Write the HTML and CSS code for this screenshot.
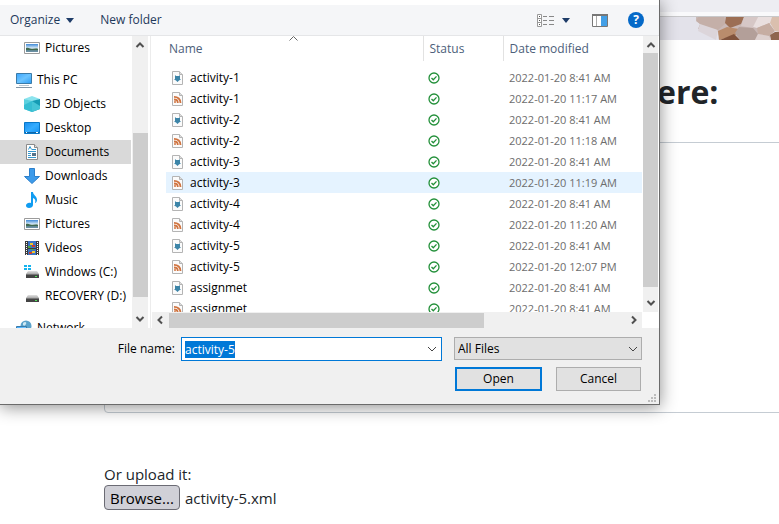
FILE: index.html
```html
<!DOCTYPE html>
<html lang="en">
<head>
<meta charset="utf-8">
<title>Upload activity</title>
<link rel="stylesheet" href="styles.css">
</head>
<body>
<svg class="defs" aria-hidden="true">
  <defs>
    <linearGradient id="sky" x1="0" y1="0" x2="0" y2="1"><stop offset="0" stop-color="#3f8ad8"/><stop offset=".55" stop-color="#e4f1f8"/><stop offset=".6" stop-color="#527b78"/><stop offset="1" stop-color="#6f94ac"/></linearGradient>
    <linearGradient id="screen" x1="0" y1="0" x2="1" y2="1"><stop offset="0" stop-color="#3aa5ff"/><stop offset=".5" stop-color="#6cc4ff"/><stop offset="1" stop-color="#2d9cf4"/></linearGradient>
    <linearGradient id="deep" x1="0" y1="0" x2="1" y2="1"><stop offset="0" stop-color="#1a8dee"/><stop offset=".5" stop-color="#35adff"/><stop offset="1" stop-color="#1590f0"/></linearGradient>
    <linearGradient id="metal" x1="0" y1="0" x2="0" y2="1"><stop offset="0" stop-color="#e2e2e2"/><stop offset="1" stop-color="#a9a9a9"/></linearGradient>
  </defs>
  <symbol id="i-pictures" viewBox="0 0 16 16"><path d="M.5 2.500h15v11H.5z" fill="#fff" stroke="#9b9b9b"/><path d="M2 4h12v8H2z" fill="url(#sky)"/><path d="M2 8c3-1 4 1 6 1s4-1 6 0v1H2z" fill="#416a50"/></symbol>
  <symbol id="i-pc" viewBox="0 0 16 16"><path d="M.5 1.500h15v10H.5z" fill="url(#screen)" stroke="#3b7ba8"/><path d="M3 13h10v1H3z" fill="#b9c6d0"/><path d="M0 15h16v1H0z" fill="#8496a5"/></symbol>
  <symbol id="i-cube" viewBox="0 0 16 16"><path d="M0 3l8-3 8 3-8 3z" fill="#8ce4ee"/><path d="M0 3l8 2v11l-8-3z" fill="#5bd0de"/><path d="M16 3L8 5v11l8-3z" fill="#159bb4"/><path d="M0 9l8-4v11l-8-3z" fill="#35bdd2"/><path d="M8 5l8 5v3l-8 3z" fill="#44c4d6"/></symbol>
  <symbol id="i-desktop" viewBox="0 0 16 16"><path d="M.5 2.500h15v11H.5z" fill="url(#deep)" stroke="#0878c8"/><path d="M1 12h14v1H1z" fill="#1167a8"/><path d="M2 12h1v1H2zM12 12h2v1h-2z" fill="#fff"/></symbol>
  <symbol id="i-doc" viewBox="0 0 16 16"><path d="M2.500.5h8l3 3v12h-11z" fill="#fff" stroke="#8b8b8b"/><path d="M10.500.5v3h3" fill="#ddd" stroke="#8b8b8b"/><path d="M4.500 5.500l1.500-3 1.500 3M8 5.500h4M4 7.500h8M4 9.500h3M4 11.500h3M4 13.500h8" fill="none" stroke="#3497cf"/><path d="M8 9h4v3H8z" fill="#55738a"/></symbol>
  <symbol id="i-down" viewBox="0 0 16 16"><path d="M5.500.5h5v8h5L8 15.500.5 8.500h5z" fill="#3d9bea" stroke="#2c7fcb"/></symbol>
  <symbol id="i-music" viewBox="0 0 16 16"><path d="M7 0h2c0 3 4 4 4 8 0 1-1 3-2 3 1-3 0-4-2-5v7c0 2-2 3-4 3s-3-1-3-2.500S4 10 7 11z" fill="#109cf1"/></symbol>
  <symbol id="i-video" viewBox="0 0 16 16"><path d="M1 1h14v14H1z" fill="#3c3c3c"/><path d="M4 1h8v7H4zM4 9h8v6H4z" fill="#3a72c4"/><path d="M2.500 2v13M13.500 2v13" stroke="#fff" stroke-dasharray="1 1"/><path d="M6 3h3v2H6zM8 11h3v2H8z" fill="#f0c52c"/><path d="M8 5h3v2H8zM5 12h3v2H5z" fill="#c83c2e"/><path d="M4 6h3v2H4zM7 9h3v1H7z" fill="#4ba846"/></symbol>
  <symbol id="i-drive" viewBox="0 0 16 16"><path d="M4 7h9l2 3H2z" fill="url(#metal)"/><path d="M2 10h13v4H2z" fill="#444"/><path d="M2 10h13v1H2z" fill="#777"/><path d="M11 12h2v1h-2z" fill="#51e35a"/></symbol>
  <symbol id="i-windrive" viewBox="0 0 16 16"><use href="#i-drive"/><path d="M0 1h3v2H0zM4 1h3v2H4zM0 4h3v2H0zM4 4h3v2H4z" fill="#15b3ee"/></symbol>
  <symbol id="i-network" viewBox="0 0 16 16"><circle cx="10" cy="6" r="5.500" fill="#5ba3cb"/><path d="M7 3c2-2 4-1 3 1s-2 2-3 1z" fill="#cfe9f4"/><path d="M.5 6.500h10v7H.5z" fill="url(#screen)" stroke="#3b7ba8"/></symbol>
  <symbol id="i-page" viewBox="0 0 11 14"><path d="M.5.5h7l3 3v10H.5z" fill="#fbfbfb" stroke="#b4b4b4"/><path d="M7.500.5v3h3" fill="#ddd" stroke="#b4b4b4"/></symbol>
  <symbol id="i-code" viewBox="0 0 11 14"><use href="#i-page"/><path d="M3 4l1 1h3l1-1v4l1 .500-2 1L5.500 11 4 9.500l-2-1L3 8z" fill="#3d85a8"/></symbol>
  <symbol id="i-feed" viewBox="0 0 11 14"><use href="#i-page"/><path d="M2 4.800c4 0 6.500 2.500 6.500 6.200M2 7.500c2.500 0 3.800 1.400 3.800 3.500" fill="none" stroke="#d07440" stroke-width="1.800"/><circle cx="3" cy="10" r="1" fill="#d07440"/></symbol>
  <symbol id="i-ok" viewBox="0 0 12 12"><circle cx="6" cy="6" r="5" fill="#fff" stroke="#23903a" stroke-width="1.300"/><path d="M3.500 6l1.800 1.800 3.200-3.400" fill="none" stroke="#23903a" stroke-width="1.300"/></symbol>
  <symbol id="i-chev" viewBox="0 0 10 10"><path d="M1.500 7L5 3.500 8.500 7" fill="none" stroke="#505050" stroke-width="2"/></symbol>
</svg>

<main class="page">
  <div class="browser-bar"></div>
  <div class="banner">
    <svg class="mosaic" viewBox="0 0 89 23" aria-hidden="true">
      <path d="M6 0h74v23H30L28 15 8 12 10 7 6 3z" fill="#c9b8b6"/>
      <path d="M10 7l12-1 6 8-2 9-18-9z" fill="#dcd5da"/>
      <path d="M8 0h26l2 6-8 7-18-6-4-3z" fill="#c4afa8"/>
      <path d="M36 0h18l-3 7-11 4-5-5z" fill="#9c6e54"/>
      <path d="M28 14l9-4 12 2-3 6-17 5z" fill="#b98c6c"/>
      <path d="M30 23l14-6 6 6z" fill="#80533c"/>
      <path d="M54 0h14l-5 11-12-2z" fill="#d6c7c6"/>
      <path d="M68 0h14l-2 6-13 5-4-1z" fill="#e9dfdf"/>
      <path d="M49 10l14 1 5 6-3 6H50l-5-7z" fill="#b39f99"/>
      <path d="M67 11l12-5 6 8-6 5-11-2z" fill="#c6ada2"/>
      <path d="M82 0h7v15l-4-1-5-8z" fill="#dabfae"/>
      <path d="M68 17l11 2 2 4H65z" fill="#ddd0ce"/>
      <path d="M80 18l5-3h4v8h-8z" fill="#8e664f"/>
    </svg>
  </div>
  <h1 class="title">ere:</h1>
  <textarea class="source" aria-label="Activity source"></textarea>
  <div class="upload">
    <div>Or upload it:</div>
    <div class="picker"><button class="browse" type="button">Browse...</button><span>activity-5.xml</span></div>
  </div>
</main>

<section class="dialog" role="dialog" aria-label="File upload">
  <div class="toolbar">
    <button class="tool organize" type="button">Organize <svg width="8" height="5" viewBox="0 0 8 5"><path d="M0 0h8L4 5z" fill="#1e3c68"/></svg></button>
    <button class="tool" type="button">New folder</button>
    <span class="spacer"></span>
    <button class="tool views" type="button" aria-label="View">
      <svg width="17" height="13" viewBox="0 0 17 13"><path d="M.5.5h4v12h-4zM.5 4.500h4M.5 8.500h4" fill="#fff" stroke="#999"/><path d="M2 2h1v1H2zM2 6h1v1H2zM2 10h1v1H2z" fill="#555"/><path d="M6 2.500h4M12 2.500h5M6 6.500h4M12 6.500h5M6 10.500h4M12 10.500h5" stroke="#888"/></svg>
      <svg width="8" height="5" viewBox="0 0 8 5"><path d="M0 0h8L4 5z" fill="#1e3c68"/></svg>
    </button>
    <button class="tool" type="button" aria-label="Preview pane"><svg width="16" height="13" viewBox="0 0 16 13"><path d="M.5 1h15v11.500H.5z" fill="#fff" stroke="#777"/><path d="M0 0h16v2H0z" fill="#777"/><path d="M4.500 2v10" stroke="#aaa"/><path d="M9 2h6v10H9z" fill="#439fe6"/></svg></button>
    <button class="tool help" type="button" aria-label="Help">?</button>
  </div>

  <div class="body">
    <nav class="nav">
      <ul class="tree">
        <li class="sub"><svg><use href="#i-pictures"/></svg>Pictures</li>
        <li class="root"><svg><use href="#i-pc"/></svg>This PC</li>
        <li class="sub"><svg><use href="#i-cube"/></svg>3D Objects</li>
        <li class="sub"><svg><use href="#i-desktop"/></svg>Desktop</li>
        <li class="sub current"><svg><use href="#i-doc"/></svg>Documents</li>
        <li class="sub"><svg><use href="#i-down"/></svg>Downloads</li>
        <li class="sub"><svg><use href="#i-music"/></svg>Music</li>
        <li class="sub"><svg><use href="#i-pictures"/></svg>Pictures</li>
        <li class="sub"><svg><use href="#i-video"/></svg>Videos</li>
        <li class="sub"><svg><use href="#i-windrive"/></svg>Windows (C:)</li>
        <li class="sub"><svg><use href="#i-drive"/></svg>RECOVERY (D:)</li>
        <li class="root"><svg><use href="#i-network"/></svg>Network</li>
      </ul>
      <div class="vbar"><svg class="up"><use href="#i-chev"/></svg><i class="thumb nav-thumb"></i><svg class="dn"><use href="#i-chev"/></svg></div>
    </nav>
    <div class="files">
      <div class="list">
        <table class="grid">
          <colgroup><col><col class="c-status"><col class="c-date"></colgroup>
          <thead><tr><th><svg class="sort" viewBox="0 0 9 5"><path d="M.5 4.500l4-4 4 4" fill="none" stroke="#666"/></svg>Name</th><th>Status</th><th>Date modified</th></tr></thead>
          <tbody>
            <tr><td><svg><use href="#i-code"/></svg>activity-1</td><td><svg><use href="#i-ok"/></svg></td><td>2022-01-20 8:41 AM</td></tr>
            <tr><td><svg><use href="#i-feed"/></svg>activity-1</td><td><svg><use href="#i-ok"/></svg></td><td>2022-01-20 11:17 AM</td></tr>
            <tr><td><svg><use href="#i-code"/></svg>activity-2</td><td><svg><use href="#i-ok"/></svg></td><td>2022-01-20 8:41 AM</td></tr>
            <tr><td><svg><use href="#i-feed"/></svg>activity-2</td><td><svg><use href="#i-ok"/></svg></td><td>2022-01-20 11:18 AM</td></tr>
            <tr><td><svg><use href="#i-code"/></svg>activity-3</td><td><svg><use href="#i-ok"/></svg></td><td>2022-01-20 8:41 AM</td></tr>
            <tr class="hover"><td><svg><use href="#i-feed"/></svg>activity-3</td><td><svg><use href="#i-ok"/></svg></td><td>2022-01-20 11:19 AM</td></tr>
            <tr><td><svg><use href="#i-code"/></svg>activity-4</td><td><svg><use href="#i-ok"/></svg></td><td>2022-01-20 8:41 AM</td></tr>
            <tr><td><svg><use href="#i-feed"/></svg>activity-4</td><td><svg><use href="#i-ok"/></svg></td><td>2022-01-20 11:20 AM</td></tr>
            <tr><td><svg><use href="#i-code"/></svg>activity-5</td><td><svg><use href="#i-ok"/></svg></td><td>2022-01-20 8:41 AM</td></tr>
            <tr><td><svg><use href="#i-feed"/></svg>activity-5</td><td><svg><use href="#i-ok"/></svg></td><td>2022-01-20 12:07 PM</td></tr>
            <tr><td><svg><use href="#i-code"/></svg>assignmet</td><td><svg><use href="#i-ok"/></svg></td><td>2022-01-20 8:41 AM</td></tr>
            <tr><td><svg><use href="#i-feed"/></svg>assignmet</td><td><svg><use href="#i-ok"/></svg></td><td>2022-01-20 8:41 AM</td></tr>
          </tbody>
        </table>
      </div>
      <div class="vbar"><svg class="up"><use href="#i-chev"/></svg><i class="thumb list-thumb"></i><svg class="dn"><use href="#i-chev"/></svg></div>
      <div class="hbar"><svg class="lt"><use href="#i-chev"/></svg><i class="thumb wide-thumb"></i><svg class="rt"><use href="#i-chev"/></svg></div>
    </div>
  </div>

  <form class="footer">
    <label class="name-label" for="fname">File name:</label>
    <div class="combo"><input id="fname" type="text" value="activity-5" autocomplete="off" spellcheck="false"><svg viewBox="0 0 10 6"><path d="M1 1l4 4 4-4" fill="none" stroke="#444"/></svg></div>
    <div class="type"><select aria-label="File type"><option>All Files</option></select><svg viewBox="0 0 10 6"><path d="M1 1l4 4 4-4" fill="none" stroke="#444"/></svg></div>
    <div class="actions"><button class="primary" type="button">Open</button><button type="button">Cancel</button></div>
    <svg class="grip" viewBox="0 0 8 8" aria-hidden="true"><path d="M6 0h2v2H6zM3 3h2v2H3zM6 3h2v2H6zM0 6h2v2H0zM3 6h2v2H3zM6 6h2v2H6z" fill="#bcbcbc"/></svg>
  </form>
</section>
<script src="main.js"></script>
</body>
</html>
```
FILE: styles.css
```css
* { box-sizing: border-box; }
body {
  margin: 0;
  background: #fff;
  color: #212529;
  font: 15px/24px "Open Sans", "Noto Sans", sans-serif;
  overflow: hidden;
}
button, input, select { font: inherit; color: inherit; margin: 0; }
.defs { position: absolute; width: 0; height: 0; }

/* page behind the dialog */
.page { display: flex; flex-direction: column; }
.browser-bar { height: 17px; background: linear-gradient(#ededf2 12px, #f9f9fb 12px 16px, #c8c8ca 16px); }
.banner { display: flex; justify-content: flex-end; height: 23px; background: #e3e2ea; }
.mosaic { width: 89px; height: 23px; }
.title { margin: 32px 0 0; padding-left: 657px; font: 700 32px/40px "Open Sans", sans-serif; }
.source {
  height: 271px;
  margin: 30px -8px 0 104px;
  border: 1px solid #c5ccd3;
  border-radius: 4px;
  background: #fff;
  resize: none;
}
.upload { margin: 50px 0 0 104px; line-height: 22px; }
.picker { display: flex; align-items: center; gap: 5px; }
.browse {
  height: 25px;
  padding: 0 5px;
  border: 1px solid #6b6b74;
  border-radius: 4px;
  background: #d0d0d7;
  color: #000;
  line-height: 22px;
}

/* file dialog */
.dialog {
  position: absolute;
  top: 0;
  left: 0;
  right: 119px;
  padding-top: 5px;
  border: solid #6b6b6b;
  border-width: 0 1px 1px 0;
  background: #fff;
  color: #000;
  font-size: 12px;
  line-height: 16px;
  box-shadow: 0 2px 16px rgba(0, 0, 0, .45);
}
.toolbar {
  display: flex;
  align-items: center;
  gap: 22px;
  height: 31px;
  padding: 0 15px 0 10px;
  border-bottom: 1px solid #e5e6e8;
  background: #f5f6f8;
}
.tool { display: flex; align-items: center; gap: 6px; padding: 0; border: 0; background: none; color: #1e395b; }
.organize { margin-right: 4px; }
.spacer { flex: 1; }
.views { gap: 8px; }
.help {
  justify-content: center;
  width: 16px;
  height: 16px;
  border-radius: 50%;
  background: #0569c8;
  color: #fff;
  font-weight: 700;
  margin-left: -2px;
}
.body { display: flex; height: 292px; }
.nav { display: flex; width: 151px; border-right: 1px solid #ececec; overflow: hidden; }
.tree { flex: 1; margin: 0; padding: 0; list-style: none; }
.tree li { display: flex; align-items: center; height: 24px; margin-right: 1px; white-space: nowrap; }
.tree svg { width: 16px; height: 16px; flex: none; }
.root { margin-top: 8px; padding-left: 16px; gap: 5px; }
.sub { padding-left: 24px; gap: 5px; }
.current { background: #d9d9d9; }
.vbar {
  display: flex;
  flex-direction: column;
  align-items: center;
  width: 16px;
  padding: 4px 0;
  background: #f0f0f0;
}
.nav .vbar { margin-right: 2px; }
.vbar svg, .hbar svg { width: 10px; height: 10px; flex: none; }
.thumb { background: #cdcdcd; }
.nav-thumb { width: 15px; height: 164px; margin-top: 83px; }
.dn { margin-top: auto; transform: rotate(180deg); }
.lt { transform: rotate(-90deg); }
.rt { transform: rotate(90deg); margin-left: auto; }
.files {
  flex: 1;
  display: grid;
  grid-template: 276px 16px / 1fr 17px;
  padding-left: 1px;
}
.files .vbar { width: 15px; margin-left: 1px; }
.list-thumb { width: 15px; height: 234px; margin-top: 3px; }
.hbar { display: flex; align-items: center; padding: 0 3px; background: #f0f0f0; }
.wide-thumb { width: 65%; height: 15px; margin-left: 4px; }
.list { overflow: hidden; padding-left: 14px; }
.grid { width: 100%; border-collapse: collapse; table-layout: fixed; }
.c-status { width: 80px; }
.c-date { width: 139px; }
.grid th {
  position: relative;
  height: 25px;
  padding: 0 6px;
  border-right: 1px solid #e2e2e2;
  color: #4c607a;
  font-weight: 400;
  text-align: left;
}
.grid th:first-child { padding-left: 3px; }
.grid th:last-child { border-right: 0; }
.sort { position: absolute; top: 0; left: 50%; width: 9px; height: 5px; margin-left: -5px; }
.grid tbody::before { content: ""; display: block; height: 6px; }
.grid td { height: 21px; padding: 0 6px; color: #6d6d6d; white-space: nowrap; }
.grid td:first-child { color: #000; }
.grid td:last-child { font-size: 11px; }
.grid td svg { width: 12px; height: 12px; vertical-align: middle; margin-left: -1px; }
.grid td:first-child svg { width: 11px; height: 14px; margin: 0 7px 0 0; }
.hover { background: #e5f3ff; }

.footer {
  position: relative;
  display: grid;
  grid-template: 24px 24px / 175px 1fr 188px;
  column-gap: 6px;
  row-gap: 6px;
  padding: 9px 17px 13px 0;
  background: #f0f0f0;
}
.name-label { text-align: right; align-self: center; }
.combo, .type { display: flex; align-items: center; }
.combo { margin-right: 6px; padding: 0 4px 0 2px; border: 1px solid #0078d7; background: #fff; }
.combo input { flex: 1; min-width: 0; height: 18px; padding: 0 1px; border: 0; outline: 0; background: none; }
.combo input::selection { background: #0078d7; color: #fff; }
.combo svg, .type svg { width: 10px; height: 6px; flex: none; }
.type { position: relative; height: 23px; }
.type svg { position: absolute; right: 4px; pointer-events: none; }
.type select {
  appearance: none;
  width: 100%;
  height: 23px;
  padding: 0 3px;
  border: 1px solid #adadad;
  border-radius: 0;
  background: #e1e1e1;
}
.actions { grid-column: 3; display: flex; gap: 14px; padding: 0 1px; }
.actions button { flex: 1 1 0; min-width: 0; padding: 0; border: 1px solid #adadad; background: #e1e1e1; }
.actions .primary { border: 2px solid #0078d7; }
.grip { position: absolute; right: 3px; bottom: 2px; width: 8px; height: 8px; }
```
FILE: main.js
```js
const field = document.getElementById("fname");
field.focus();
field.select();
```
